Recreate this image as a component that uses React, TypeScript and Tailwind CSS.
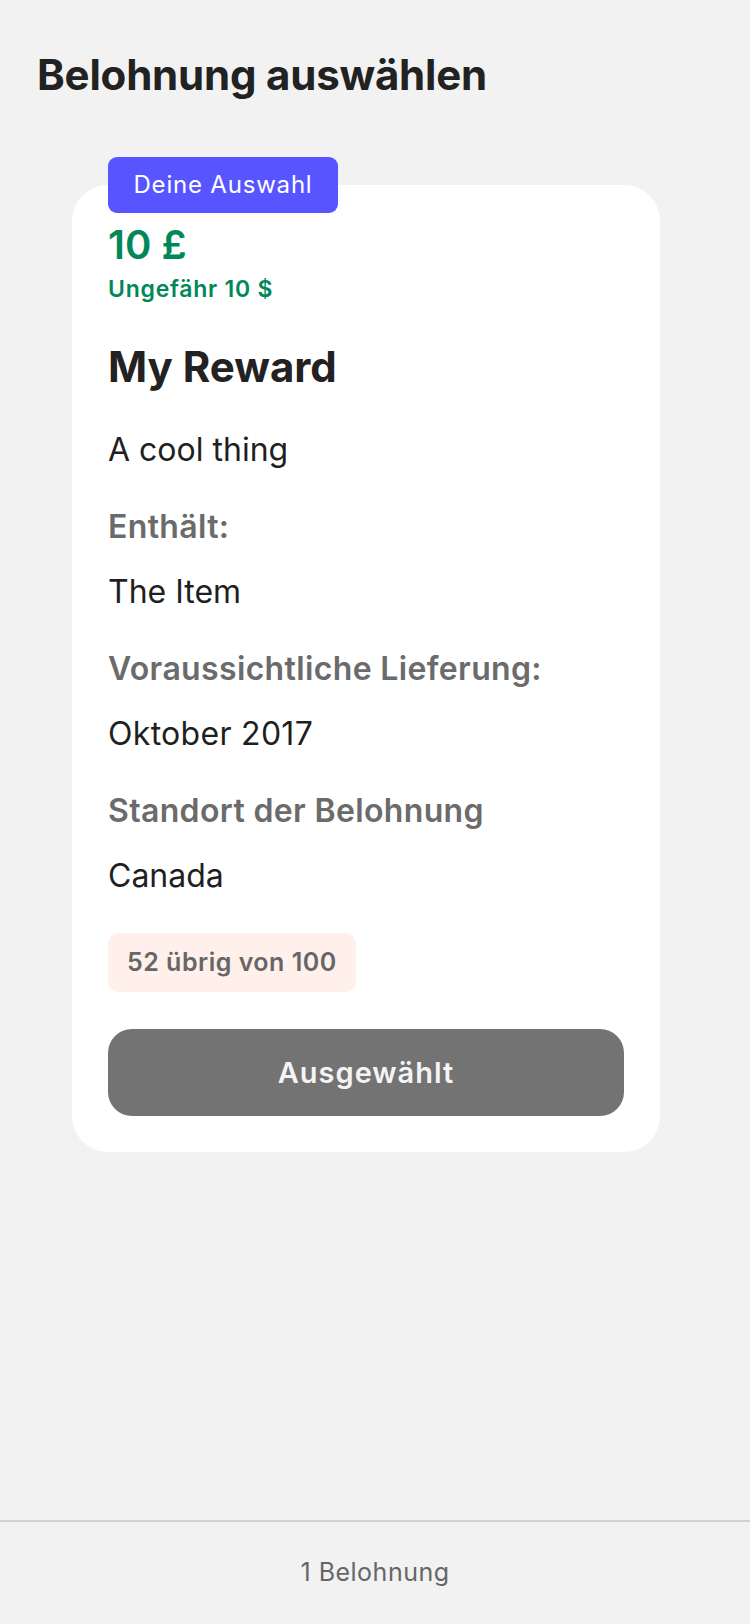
import React from "react";

export default function App() {
  const font = { fontFamily: "Inter, 'Noto Sans', sans-serif" };
  return (
    <div style={font} className="w-[750px] h-[1624px] bg-[#f2f2f2] flex flex-col">
      <main className="flex-1 flex flex-col">
        <h1 className="pt-[50px] pl-[37px] text-[42px] leading-[50px] font-bold text-[#222222] tracking-[-0.2px]">
          Belohnung auswählen
        </h1>
        <div className="relative mt-[85px] ml-[72px] w-[588px] bg-white rounded-[36px] px-[36px] pt-[36px] pb-[36px] flex flex-col">
          <div className="absolute top-[-28px] left-[36px] h-[56px] w-[230px] rounded-[9px] bg-[#5755ff] flex items-center justify-center text-white text-[24px] leading-[28px] tracking-[0.8px]">
            Deine Auswahl
          </div>
          <div className="text-[40px] leading-[48px] font-semibold text-[#028858]">10 £</div>
          <div className="mt-[6px] text-[23px] leading-[28px] font-semibold text-[#028858] tracking-[0.75px]">Ungefähr 10 $</div>
          <div className="mt-[39px] text-[42px] leading-[50px] font-bold text-[#222222]">My Reward</div>
          <div className="mt-[38px] text-[32px] leading-[40px] text-[#1f1f1f]">A cool thing</div>
          <div className="mt-[37px] text-[32px] leading-[40px] font-semibold text-[#6b6b6b] tracking-[0.35px]">Enthält:</div>
          <div className="mt-[25px] text-[32px] leading-[40px] text-[#1f1f1f]">The Item</div>
          <div className="mt-[37px] text-[32px] leading-[40px] font-semibold text-[#6b6b6b] tracking-[0.35px]">Voraussichtliche Lieferung:</div>
          <div className="mt-[25px] text-[32px] leading-[40px] text-[#1f1f1f] tracking-[0.3px]">Oktober 2017</div>
          <div className="mt-[37px] text-[32px] leading-[40px] font-semibold text-[#6b6b6b] tracking-[0.35px]">Standort der Belohnung</div>
          <div className="mt-[25px] text-[32px] leading-[40px] text-[#1f1f1f]">Canada</div>
          <div className="mt-[37px] self-start h-[59px] px-[19px] rounded-[10px] bg-[#fff0eb] flex items-center text-[25px] font-semibold text-[#666666] tracking-[0.5px]">
            52 übrig von 100
          </div>
          <button className="mt-[37px] h-[87px] w-full rounded-[24px] bg-[#737373] flex items-center justify-center text-[29px] font-semibold text-[#f4f4f4] tracking-[1px]">
            Ausgewählt
          </button>
        </div>
      </main>
      <footer className="h-[104px] border-t-2 border-[#d2d2d2] flex items-center justify-center text-[25px] text-[#666666] tracking-[0.5px]">
        1 Belohnung
      </footer>
    </div>
  );
}
